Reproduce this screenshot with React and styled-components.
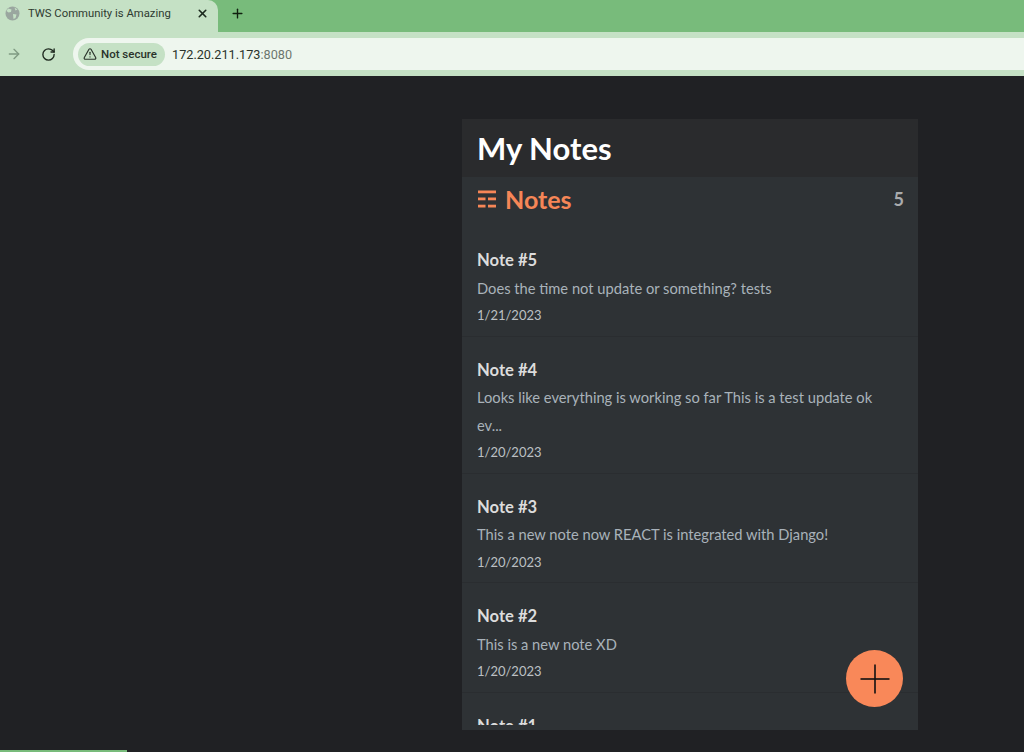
import React from "react"
import styled, {createGlobalStyle} from "styled-components"
import {ArrowRight, RotateCw, TriangleAlert, X, Plus} from "lucide-react"

const Global = createGlobalStyle`
    html, body {
        margin: 0;
        height: 100%;
        background: #202124;
        overflow: hidden;
    }
`

const Page = styled.div`
    width: 1024px;
    height: 752px;
    display: flex;
    flex-direction: column;
    background: #202124;
    font-family: "Lato", "Noto Sans", sans-serif;
    overflow: hidden;
`

const TabStrip = styled.div`
    height: 32px;
    background: #78bb7b;
    display: flex;
    align-items: stretch;
    flex-shrink: 0;
`

const Tab = styled.div`
    width: 218px;
    background: #c5e1c5;
    border-radius: 0 10px 0 0;
    display: flex;
    align-items: center;
    padding: 0 0 6px 5px;
    box-sizing: border-box;
    color: #2e3a30;
    font: 11.3px "Roboto", sans-serif;
`

const TabTitle = styled.span`
    margin-left: 8px;
    flex: 1;
`

const NewTab = styled.div`
    width: 38px;
    display: flex;
    align-items: center;
    justify-content: center;
    padding-bottom: 6px;
    color: #10200f;
`

const Toolbar = styled.div`
    height: 44px;
    background: #c5e1c5;
    display: flex;
    align-items: center;
    flex-shrink: 0;
`

const NavButton = styled.div`
    width: 34px;
    display: flex;
    justify-content: center;
    color: ${props => props.$dim ? "#7f9a82" : "#1f2a20"};
    margin-left: ${props => props.$left || 0}px;
`

const AddressBar = styled.div`
    flex: 1;
    height: 32px;
    margin-left: 8px;
    background: #eef6ee;
    border-radius: 16px 0 0 16px;
    display: flex;
    align-items: center;
    padding-left: 5px;
    font: 12.7px "Roboto", sans-serif;
    color: #2a332b;
`

const Security = styled.div`
    height: 23px;
    width: 87px;
    box-sizing: border-box;
    padding-left: 5px;
    background: #c5e1c5;
    border-radius: 12px;
    display: flex;
    align-items: center;
    gap: 4px;
    font-size: 11.5px;
    font-weight: 500;
    color: #2a332b;
`

const Url = styled.span`
    margin-left: 7px;
`

const Port = styled.span`
    color: #6d766e;
`

const Content = styled.main`
    flex: 1;
    display: flex;
    justify-content: flex-end;
    padding: 43px 106px 22px 0;
    min-height: 0;
    box-sizing: border-box;
`

const Panel = styled.section`
    width: 456px;
    height: 611px;
    padding-bottom: 5px;
    box-sizing: border-box;
    background: #2e3235;
    position: relative;
    display: flex;
    flex-direction: column;
`

const AppHeader = styled.header`
    height: 58px;
    flex-shrink: 0;
    background: #2a2b2d;
    display: flex;
    align-items: center;
    padding-left: 15px;
`

const AppTitle = styled.h1`
    margin: 0;
    font-size: 31px;
    font-weight: 700;
    color: #fff;
`

const ListHeader = styled.div`
    height: 50px;
    flex-shrink: 0;
    display: flex;
    justify-content: space-between;
    padding: 8px 14px 0 16px;
    box-sizing: border-box;
`

const ListTitle = styled.h2`
    margin: 0;
    height: 28px;
    display: flex;
    align-items: center;
    gap: 9px;
    font-size: 25px;
    font-weight: 700;
    color: #f68657;
`

const Count = styled.span`
    height: 28px;
    line-height: 28px;
    font-size: 18px;
    font-weight: 700;
    color: #a9abad;
`

const NoteList = styled.div`
    flex: 1;
    min-height: 0;
    overflow: hidden;
`

const NoteRow = styled.article`
    padding: 20px 24px 6px 15px;
    border-bottom: 1px solid #2a2d30;
    line-height: 27.5px;
`

const NoteTitle = styled.h3`
    margin: 0;
    font-size: 16.6px;
    font-weight: 700;
    color: #dcdcdc;
`

const NoteBody = styled.p`
    margin: 0;
    font-size: 14.7px;
    color: #a9b2ba;
`

const NoteDate = styled.p`
    margin: 0;
    font-size: 13px;
    color: #bcc0c4;
`

const AddButton = styled.div`
    position: absolute;
    right: 15px;
    bottom: 23px;
    width: 57px;
    height: 57px;
    border-radius: 50%;
    background: #f98859;
    display: flex;
    align-items: center;
    justify-content: center;
`

const LoadBar = styled.div`
    position: absolute;
    left: 0;
    bottom: 0;
    width: 127px;
    height: 2px;
    background: #78bb7b;
`

const notes = [
    {title: "Note #5", body: "Does the time not update or something? tests", date: "1/21/2023"},
    {title: "Note #4", body: "Looks like everything is working so far This is a test update ok ev...", date: "1/20/2023"},
    {title: "Note #3", body: "This a new note now REACT is integrated with Django!", date: "1/20/2023"},
    {title: "Note #2", body: "This is a new note XD", date: "1/20/2023"},
    {title: "Note #1", body: "This is a new note", date: "1/20/2023"},
]

function GlobeIcon() {
    return (
        <svg width="15" height="15" viewBox="0 0 15 15">
            <circle cx="7.5" cy="7.5" r="7" fill="#9aa69f" />
            <path d="M3 2.5 L6.5 3.5 L6 6 L3.5 6.5 L1.5 5 Z M8 8 L11.5 8.5 L10.5 12 L8.5 13 Z M9.5 1.5 L12.5 3.5 L10.5 4.5 Z" fill="#c5e1c5" />
        </svg>
    )
}

function ListIcon() {
    return (
        <svg width="18" height="18" viewBox="0 0 18 18" fill="#f68657">
            <rect x="0" y="0.5" width="18" height="2.8" />
            <rect x="0" y="7.5" width="7.5" height="2.8" />
            <rect x="10" y="7.5" width="8" height="2.8" />
            <rect x="0" y="14.7" width="7.5" height="2.8" />
            <rect x="10" y="14.7" width="8" height="2.8" />
        </svg>
    )
}

function App() {
    return (
        <Page>
            <Global />
            <TabStrip>
                <Tab>
                    <GlobeIcon />
                    <TabTitle>TWS Community is Amazing</TabTitle>
                    <X size={13} strokeWidth={3} color="#1c2a1e" style={{marginRight: 9}} />
                </Tab>
                <NewTab><Plus size={15} strokeWidth={2.2} /></NewTab>
            </TabStrip>
            <Toolbar>
                <NavButton $dim $left={-3}><ArrowRight size={16} /></NavButton>
                <NavButton><RotateCw size={15} strokeWidth={2.2} /></NavButton>
                <AddressBar>
                    <Security>
                        <TriangleAlert size={14} />
                        Not secure
                    </Security>
                    <Url>172.20.211.173<Port>:8080</Port></Url>
                </AddressBar>
            </Toolbar>
            <Content>
                <Panel>
                    <AppHeader>
                        <AppTitle>My Notes</AppTitle>
                    </AppHeader>
                    <ListHeader>
                        <ListTitle><ListIcon />Notes</ListTitle>
                        <Count>5</Count>
                    </ListHeader>
                    <NoteList>
                        {notes.map(note => (
                            <NoteRow key={note.title}>
                                <NoteTitle>{note.title}</NoteTitle>
                                <NoteBody>{note.body}</NoteBody>
                                <NoteDate>{note.date}</NoteDate>
                            </NoteRow>
                        ))}
                    </NoteList>
                    <AddButton>
                        <svg width="30" height="30" viewBox="0 0 30 30" stroke="#111" strokeWidth="1.6">
                            <line x1="15" y1="0.5" x2="15" y2="29.5" />
                            <line x1="0.5" y1="15" x2="29.5" y2="15" />
                        </svg>
                    </AddButton>
                </Panel>
            </Content>
            <LoadBar />
        </Page>
    )
}

export default App
